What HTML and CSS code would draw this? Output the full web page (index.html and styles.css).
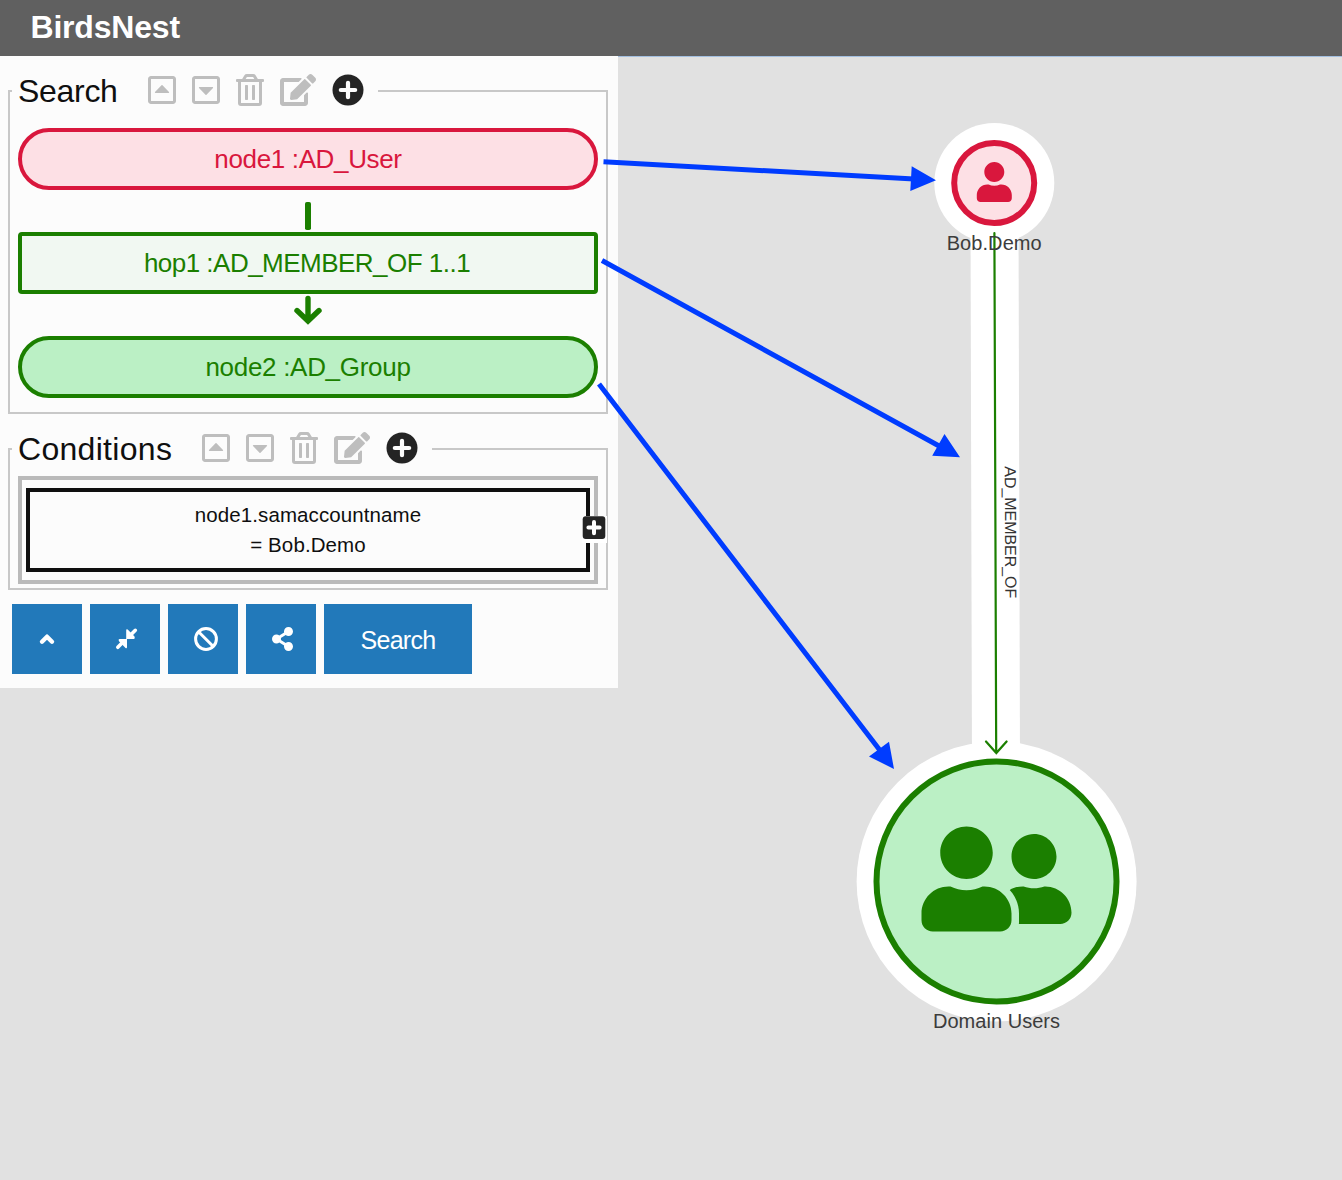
FILE: index.html
```html
<!DOCTYPE html>
<html lang="en">
<head>
<meta charset="utf-8">
<title>BirdsNest</title>
<link rel="stylesheet" href="styles.css">
</head>
<body>
<svg class="defs" aria-hidden="true">
  <symbol id="i-up" viewBox="0 0 448 512"><path d="M400 32H48C21.500 32 0 53.500 0 80v352c0 26.500 21.500 48 48 48h352c26.500 0 48-21.500 48-48V80c0-26.500-21.500-48-48-48zm0 394c0 3-3 6-6 6H54c-3 0-6-3-6-6V86c0-3 3-6 6-6h340c3 0 6 3 6 6zM112 287l104-106q8-7 16 0l104 106q8 17-8 17H120q-16 0-8-17z"/></symbol>
  <symbol id="i-down" viewBox="0 0 448 512"><path d="M400 32H48C21.500 32 0 53.500 0 80v352c0 26.500 21.500 48 48 48h352c26.500 0 48-21.500 48-48V80c0-26.500-21.500-48-48-48zm0 394c0 3-3 6-6 6H54c-3 0-6-3-6-6V86c0-3 3-6 6-6h340c3 0 6 3 6 6zM112 225l104 106q8 7 16 0l104-106q8-17-8-17H120q-16 0-8 17z"/></symbol>
  <symbol id="i-trash" viewBox="0 0 448 512"><path d="M268 416h24a12 12 0 0 0 12-12V188a12 12 0 0 0-12-12h-24a12 12 0 0 0-12 12v216a12 12 0 0 0 12 12zM432 80h-82.410l-34-56.700A48 48 0 0 0 274.410 0H173.590a48 48 0 0 0-41.160 23.300L98.410 80H16A16 16 0 0 0 0 96v16a16 16 0 0 0 16 16h16v336a48 48 0 0 0 48 48h288a48 48 0 0 0 48-48V128h16a16 16 0 0 0 16-16V96a16 16 0 0 0-16-16zM171.840 50.910A6 6 0 0 1 177 48h94a6 6 0 0 1 5.150 2.910L293.610 80H154.390zM368 464H80V128h288zm-212-48h24a12 12 0 0 0 12-12V188a12 12 0 0 0-12-12h-24a12 12 0 0 0-12 12v216a12 12 0 0 0 12 12z"/></symbol>
  <symbol id="i-edit" viewBox="0 0 576 512"><path d="M402.600 83.200l90.200 90.200c3.800 3.800 3.800 10 0 13.800L274.400 405.600l-92.800 10.300c-12.400 1.400-22.900-9.100-21.500-21.500l10.300-92.800L388.800 83.200c3.800-3.800 10-3.800 13.800 0zm162-22.900l-48.800-48.800c-15.200-15.200-39.900-15.200-55.200 0l-35.400 35.400c-3.800 3.800-3.800 10 0 13.800l90.200 90.200c3.800 3.800 10 3.800 13.800 0l35.400-35.400c15.200-15.300 15.200-40 0-55.200zM384 346.200V448H64V128h229.800c3.200 0 6.200-1.300 8.500-3.500l40-40c7.600-7.600 2.200-20.500-8.500-20.500H48C21.500 64 0 85.500 0 112v352c0 26.500 21.500 48 48 48h352c26.500 0 48-21.500 48-48V306.200c0-10.700-12.900-16-20.500-8.500l-40 40c-2.200 2.300-3.500 5.300-3.500 8.500z"/></symbol>
  <symbol id="i-plus" viewBox="0 0 32 32"><circle cx="16" cy="16" r="15.500"/><path class="cross" d="M16 8.800v14.400M8.800 16h14.400"/></symbol>
</svg>

<header class="topbar"><h1 class="brand">BirdsNest</h1></header>

<main class="workspace">
  <section class="panel">
    <fieldset class="group">
      <legend class="legend">
        <span class="title title-search">Search</span>
        <svg class="icon narrow"><use href="#i-up"/></svg>
        <svg class="icon narrow"><use href="#i-down"/></svg>
        <svg class="icon narrow"><use href="#i-trash"/></svg>
        <svg class="icon wide"><use href="#i-edit"/></svg>
        <svg class="icon add"><use href="#i-plus"/></svg>
      </legend>
      <div class="path">
        <div class="step user"><span>node1 :AD_User</span></div>
        <svg class="link" viewBox="0 0 42 42"><rect class="bar" x="18" y="12" width="6" height="28" rx="1.800"/></svg>
        <div class="step hop"><span>hop1 :AD_MEMBER_OF 1..1</span></div>
        <svg class="link" viewBox="0 0 42 42"><path d="M21 4.500V26M10 16.500l11 10.500 11-10.500"/></svg>
        <div class="step team"><span>node2 :AD_Group</span></div>
      </div>
    </fieldset>

    <fieldset class="group">
      <legend class="legend">
        <span class="title title-conditions">Conditions</span>
        <svg class="icon narrow"><use href="#i-up"/></svg>
        <svg class="icon narrow"><use href="#i-down"/></svg>
        <svg class="icon narrow"><use href="#i-trash"/></svg>
        <svg class="icon wide"><use href="#i-edit"/></svg>
        <svg class="icon add"><use href="#i-plus"/></svg>
      </legend>
      <div class="all-of">
        <div class="condition">
          <span class="field">node1.samaccountname</span>
          <span class="value">= Bob.Demo</span>
        </div>
        <span class="add-badge"><svg viewBox="0 0 25 27"><rect x="0.700" y="0.300" width="22.600" height="22.600" rx="3"/><path d="M12 6v11.200M6.400 11.600h11.200"/></svg></span>
      </div>
    </fieldset>

    <div class="actions">
      <button class="btn square"><svg viewBox="0 0 70 70"><path class="line" d="M30 37.700l5-5 5 5" stroke-width="4.400"/></svg></button>
      <button class="btn square"><svg viewBox="0 0 70 70"><path class="line" d="M27.800 43.300L32.500 38.600M45.300 26.300L40.600 31" stroke-width="3.600"/><path d="M37 35V43q0 2-1.500 1L29 37.200q-1-2.200.7-2.200zM36.200 35V26.600q0-2 1.500-1L44.500 32.600q1 2.200-.7 2.400z"/></svg></button>
      <button class="btn square"><svg viewBox="0 0 70 70"><path class="line" d="M30.800 28l14 14" stroke-width="3"/><circle class="line" cx="38" cy="35" r="10.400" stroke-width="3"/></svg></button>
      <button class="btn square"><svg viewBox="0 0 70 70"><path transform="translate(26 23) scale(.046875)" d="M352 320c-22.608 0-43.387 7.819-59.790 20.895l-102.486-64.054a96.551 96.551 0 0 0 0-41.683l102.486-64.054C308.613 184.181 329.392 192 352 192c53.019 0 96-42.981 96-96S405.019 0 352 0s-96 42.981-96 96c0 7.158.790 14.130 2.276 20.841L155.790 180.895C139.387 167.819 118.608 160 96 160c-53.019 0-96 42.981-96 96s42.981 96 96 96c22.608 0 43.387-7.819 59.790-20.895l102.486 64.054A96.301 96.301 0 0 0 256 416c0 53.019 42.981 96 96 96s96-42.981 96-96-42.981-96-96-96z"/></svg></button>
      <button class="btn run">Search</button>
    </div>
  </section>
</main>

<svg class="graph" viewBox="0 0 1342 1180">
  <g class="halo">
    <path d="M994.400 183L996.300 881" stroke-width="48"/>
    <circle cx="994.300" cy="183" r="60"/>
    <circle cx="996.600" cy="881.500" r="140"/>
  </g>
  <path class="edge" d="M994.400 233L996.200 753M986 741.500l10.300 11.500 10.300-11.500"/>
  <g class="node-user">
    <circle cx="994.200" cy="183" r="40"/>
    <path transform="translate(976.800 162) scale(.078125)" d="M224 256c70.700 0 128-57.300 128-128S294.700 0 224 0 96 57.300 96 128s57.300 128 128 128zm89.600 32h-16.700c-22.200 10.200-46.900 16-72.900 16s-50.600-5.800-72.900-16h-16.700C60.200 288 0 348.200 0 422.400V464c0 26.500 21.500 48 48 48h352c26.500 0 48-21.500 48-48v-41.600c0-74.200-60.200-134.400-134.400-134.400z"/>
  </g>
  <g class="node-group">
    <circle cx="996.500" cy="881.500" r="120"/>
    <path transform="translate(921.500 818.900) scale(.234375)" d="M192 256c61.900 0 112-50.100 112-112S253.900 32 192 32 80 82.100 80 144s50.100 112 112 112zm76.800 32h-8.300c-20.800 10-43.900 16-68.500 16s-47.600-6-68.500-16h-8.300C51.600 288 0 339.600 0 403.200V432c0 26.500 21.500 48 48 48h288c26.500 0 48-21.500 48-48v-28.800c0-63.600-51.600-115.200-115.200-115.200zM480 256c53 0 96-43 96-96s-43-96-96-96-96 43-96 96 43 96 96 96zm48 32h-3.800c-13.900 4.800-28.600 8-44.200 8s-30.300-3.200-44.200-8H432c-20.400 0-39.200 5.900-55.700 15.400 24.400 26.300 39.700 61.200 39.700 99.800v38.400c0 2.200-.5 4.300-.6 6.400H592c26.500 0 48-21.500 48-48 0-61.900-50.100-112-112-112z"/>
  </g>
  <text class="label" x="994.200" y="250" textLength="95">Bob.Demo</text>
  <text class="label" x="996.500" y="1028" textLength="127">Domain Users</text>
  <text class="edge-label" transform="translate(1005 532.300) rotate(89.800)" textLength="132">AD_MEMBER_OF</text>
  <g class="pointers">
    <path d="M603.500 161.800L914 179M602 260.500L940 446.500M599 384L882 753"/>
    <path class="tips" d="M936 180.300L911.700 166.200 910.300 191zM960 457.200L944.500 434 932.200 455.800zM894 769L889 741.700 869 756.500z"/>
  </g>
</svg>
</body>
</html>
```
FILE: styles.css
```css
* { box-sizing: border-box; }
body {
  margin: 0;
  min-height: 1180px;
  position: relative;
  display: flex;
  flex-direction: column;
  background: #e1e1e1;
  color: #0f0f0f;
  font-family: "Liberation Sans", Arial, sans-serif;
}
.defs { position: absolute; width: 0; height: 0; }
.cross { fill: none; stroke: #fcfcfc; stroke-width: 4.2; stroke-linecap: round; }

.topbar {
  height: 56px;
  padding: 0 30.5px;
  display: flex;
  align-items: center;
  background: #606060;
}
.brand { margin: 0 0 2px; font-size: 32px; line-height: 36px; color: #fff; letter-spacing: -0.2px; }

.workspace { flex: 1; box-shadow: inset 0 1px #a3bfe0; }
.panel { width: 618px; height: 632px; padding: 13px 10px 14px 8px; background: #fcfcfc; }

.group {
  min-width: 0;
  margin: 0 0 13px;
  padding: 0 8px 14px 2px;
  border: 2px solid #c8c8c8;
}
.group + .group { padding-bottom: 4px; margin-bottom: 14px; }
.legend {
  display: flex;
  align-items: center;
  height: 44px;
  padding: 0 14px 2px 6px;
}
.title { font-size: 32px; line-height: 40px; padding-top: 2px; flex: none; white-space: nowrap; }
.title-search { width: 130px; letter-spacing: -0.3px; }
.title-conditions { width: 184.300px; letter-spacing: 0.3px; }
.icon { flex: none; height: 32px; fill: #bebebe; }
.narrow { width: 28px; margin-right: 16px; }
.wide { width: 36px; margin-right: 16px; }
.add { width: 32px; fill: #242424; }

.path { padding: 15px 0 0 6px; display: flex; flex-direction: column; align-items: center; }
.step {
  width: 580px;
  height: 62px;
  border: 4px solid;
  display: flex;
  align-items: center;
  justify-content: center;
  font-size: 26px;
  line-height: 30px;
}
.user { color: #d9173d; background: #fde0e5; border-radius: 31px; letter-spacing: -0.35px; }
.hop { color: #1b7f00; background: #f1f8f2; border-radius: 4px; letter-spacing: -0.52px; padding-right: 2px; }
.team { color: #1b7f00; background: #bbf0c5; border-radius: 31px; letter-spacing: -0.3px; }
.link { width: 42px; height: 42px; fill: none; stroke: #1b7f00; stroke-width: 5.4; stroke-linecap: round; stroke-linejoin: miter; }
.bar { fill: #1b7f00; stroke: none; }

.all-of {
  position: relative;
  margin: 5px 0 0 6px;
  width: 580px;
  height: 108px;
  padding: 8px 4px;
  border: 4px solid #bababa;
}
.condition {
  height: 84px;
  border: 4px solid #0f0f0f;
  display: flex;
  flex-direction: column;
  align-items: center;
  justify-content: center;
  font-size: 20.5px;
  line-height: 30px;
  letter-spacing: 0.1px;
}
.add-badge { position: absolute; right: -13px; top: 36px; width: 25px; height: 27px; background: #fff; }
.add-badge svg { display: block; fill: #242424; stroke: #fff; stroke-width: 4; stroke-linecap: round; }
.add-badge rect { stroke: none; }

.actions { display: flex; gap: 8px; padding-left: 4px; }
.btn {
  height: 70px;
  padding: 0;
  border: 0;
  background: #2279ba;
  color: #fff;
  font-family: inherit;
  font-size: 25px;
}
.square { width: 70px; }
.square svg { display: block; width: 70px; height: 70px; fill: #fff; }
.square .line { fill: none; stroke: #fff; stroke-linecap: round; stroke-linejoin: round; }
.run { width: 148px; padding-top: 2px; letter-spacing: -0.7px; }

.graph { position: absolute; left: 0; top: 0; width: 1342px; height: 1180px; pointer-events: none; }
.halo { fill: #fff; }
.halo path { stroke: #fff; }
.edge { fill: none; stroke: #1b7f00; stroke-width: 2.2; stroke-linecap: round; }
.node-user circle { fill: #fde0e5; stroke: #d9173d; stroke-width: 6; }
.node-user path { fill: #d9173d; }
.node-group circle { fill: #bbf0c5; stroke: #1b7f00; stroke-width: 6; }
.node-group path { fill: #1b7f00; }
.label { font-size: 20px; fill: #3c3c3c; text-anchor: middle; }
.edge-label { font-size: 16px; fill: #333; text-anchor: middle; }
.pointers path { fill: none; stroke: #003cff; stroke-width: 5; }
.pointers .tips { fill: #003cff; stroke: none; }
```
